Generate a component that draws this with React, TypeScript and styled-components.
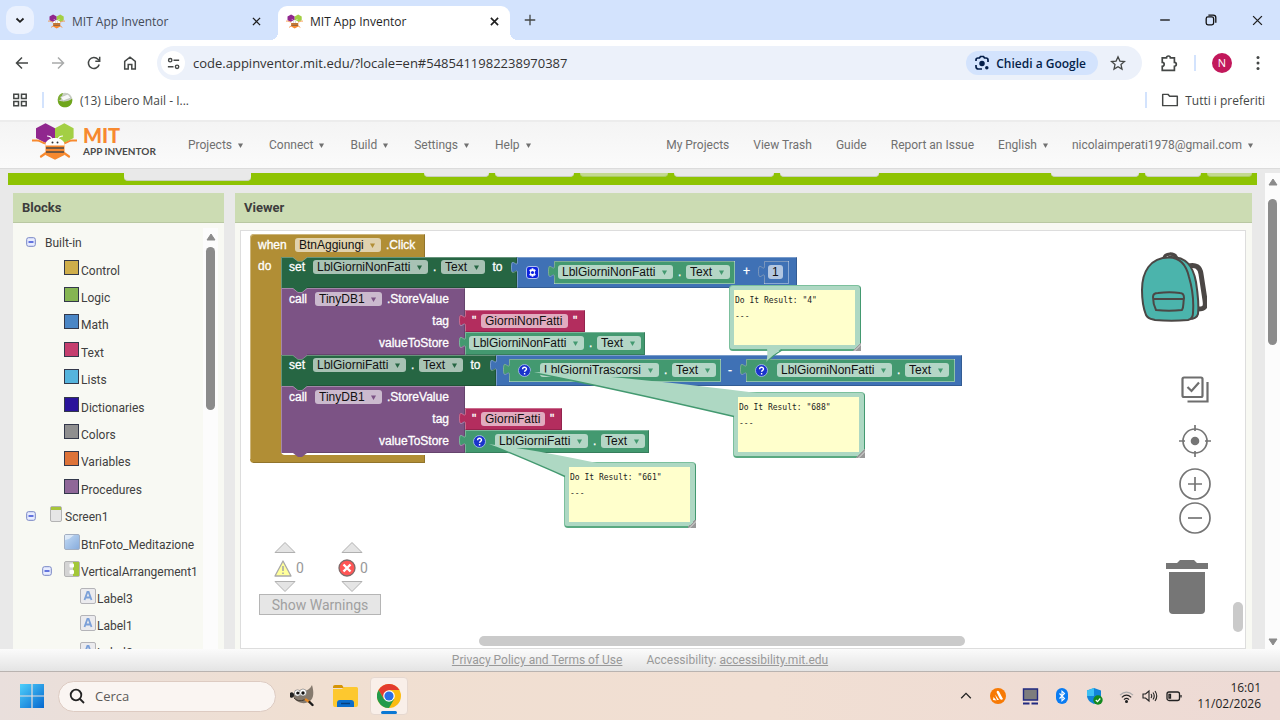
import React from "react";
import styled, { createGlobalStyle, css } from "styled-components";

const GlobalStyle = createGlobalStyle`
  *, *::before, *::after { box-sizing: border-box; }
  body { margin: 0; background: #fff; }
  button, input, select, textarea { font: inherit; color: inherit; }
  button { border: 0; background: none; padding: 0; cursor: pointer; }
  svg { display: block; flex: none; }
`;

const UI_FONT = `"Open Sans", "Noto Sans", sans-serif`;
const PAGE_FONT = `Roboto, "Liberation Sans", sans-serif`;
const BLOCK_FONT = `"Liberation Sans", Arial, sans-serif`;

/* ---------- Shell ---------- */

const Screen = styled.div`
  display: flex;
  flex-direction: column;
  height: 100vh;
  overflow: hidden;
  font-family: ${UI_FONT};
  font-size: 12px;
  color: #1f1f1f;
`;

const IconButton = styled.button<{ $w?: number }>`
  display: flex;
  flex: none;
  align-items: center;
  justify-content: center;
  width: ${(p) => p.$w ?? 36}px;
  height: 28px;
`;

/* ---------- Browser ---------- */

const TabStrip = styled.div`
  display: flex;
  align-items: flex-end;
  flex: none;
  height: 40px;
  padding: 0 0 0 6px;
  background: #d3e3fd;
`;

const TabSearch = styled.button`
  display: flex;
  align-items: center;
  justify-content: center;
  width: 28px;
  height: 28px;
  margin-bottom: 6px;
  border-radius: 10px;
  background: #eaf1fe;
`;

const Tab = styled.div<{ $active?: boolean }>`
  display: flex;
  position: relative;
  align-items: center;
  gap: 7px;
  width: 232px;
  height: 34px;
  padding: 0 8px 4px;
  margin-left: 6px;
  color: ${(p) => (p.$active ? "#1f1f1f" : "#444b57")};
  ${(p) =>
    p.$active &&
    css`
      background: #fff;
      border-radius: 9px 9px 0 0;
      &::before,
      &::after {
        content: "";
        position: absolute;
        bottom: 0;
        width: 8px;
        height: 8px;
      }
      &::before {
        left: -8px;
        background: radial-gradient(circle at 0 0, #d3e3fd 8px, #fff 8px);
      }
      &::after {
        right: -8px;
        background: radial-gradient(circle at 100% 0, #d3e3fd 8px, #fff 8px);
      }
    `}
`;

const TabTitle = styled.span`
  flex: 1;
  white-space: nowrap;
  overflow: hidden;
`;

const TabClose = styled(IconButton)`
  height: 16px;
  width: 16px;
`;

const NewTab = styled(IconButton)`
  margin: 0 auto 6px 6px;
`;

const WindowButton = styled(IconButton)`
  width: 46px;
  height: 40px;
`;

const Toolbar = styled.div`
  display: flex;
  align-items: center;
  flex: none;
  height: 46px;
  padding: 0 4px;
  background: #fff;
`;

const Omnibox = styled.div`
  display: flex;
  align-items: center;
  flex: 1;
  height: 34px;
  margin: 0 9px;
  padding: 0 10px 0 4px;
  border-radius: 17px;
  background: #ecf1fa;
`;

const SiteInfo = styled.button`
  display: flex;
  align-items: center;
  justify-content: center;
  width: 24px;
  height: 24px;
  border-radius: 50%;
  background: #fff;
`;

const Url = styled.input`
  flex: 1;
  min-width: 0;
  border: 0;
  margin: 0 8px;
  padding: 0;
  background: none;
  font-size: 13px;
  color: #333;
  outline: 0;
`;

const AskChip = styled.button`
  display: flex;
  align-items: center;
  gap: 6px;
  height: 24px;
  padding: 0 12px 0 8px;
  margin-right: 6px;
  border-radius: 12px;
  background: #d3e3fd;
  color: #041e49;
  font-weight: 600;
  white-space: nowrap;
`;

const VRule = styled.span`
  flex: none;
  width: 2px;
  height: 16px;
  background: #d3e3fd;
`;

const ToolbarRule = styled(VRule)`
  margin-left: 7px;
`;

const BookmarkRule = styled(VRule)`
  margin: 0 13px 0 14px;
`;

const Avatar = styled.button`
  width: 20px;
  height: 20px;
  margin: 0 8px 0 16px;
  border-radius: 50%;
  background: #c2185b;
  color: #fff;
  font-size: 11px;
  line-height: 20px;
`;

const Bookmarks = styled.div`
  display: flex;
  align-items: center;
  flex: none;
  height: 34px;
  padding: 0 15px 6px 12px;
  color: #444746;
`;

const Bookmark = styled.a`
  display: flex;
  align-items: center;
  gap: 7px;
  color: inherit;
  text-decoration: none;
  white-space: nowrap;
`;

const AllBookmarks = styled(Bookmark)`
  margin-left: 14px;
  gap: 6px;
`;

const Spacer = styled.span`
  flex: 1;
`;

/* ---------- App Inventor page ---------- */

const Page = styled.main`
  display: flex;
  flex-direction: column;
  flex: 1;
  min-height: 0;
  font-family: ${PAGE_FONT};
  font-size: 12px;
  background: #e9e9e9;
`;

const Header = styled.header`
  display: flex;
  align-items: center;
  flex: none;
  height: 49px;
  padding: 0 27px 0 32px;
  border-top: 2px solid #ececec;
  border-bottom: 1px solid #dcdcdc;
  background: linear-gradient(#f4f4f4, #fbfbfb);
`;

const Brand = styled.a`
  display: flex;
  gap: 6px;
  width: 156px;
  margin-bottom: 7px;
  text-decoration: none;
`;

const BrandText = styled.span`
  display: flex;
  flex-direction: column;
  padding-top: 2px;
  font-family: Lato, Roboto, sans-serif;
  font-weight: 700;
  color: #4a4a4a;
  font-size: 10px;
  line-height: 12px;
  white-space: nowrap;
`;

const BrandMit = styled.span`
  color: #f7892f;
  font-size: 20px;
  font-weight: 900;
  line-height: 20px;
`;

const Nav = styled.nav<{ $gap: number }>`
  display: flex;
  gap: ${(p) => p.$gap}px;
  color: #707070;
  white-space: nowrap;
`;

const NavButton = styled.button`
  display: flex;
  align-items: center;
  gap: 6px;
  line-height: 20px;
`;

const NavLink = styled.a`
  color: inherit;
  text-decoration: none;
  line-height: 20px;
`;

const Workspace = styled.div`
  display: flex;
  flex: 1;
  min-height: 0;
  padding-top: 4px;
`;

const Content = styled.div`
  display: flex;
  flex-direction: column;
  flex: 1;
  min-width: 0;
  padding: 0 8px;
`;

const ActionBar = styled.div`
  display: flex;
  align-items: flex-start;
  flex: none;
  height: 12px;
  padding: 0 5px 0 116px;
  background: #8ec303;
`;

const ActionButton = styled.button<{ $w: number; $tall?: boolean; $on?: boolean; $push?: boolean }>`
  flex: none;
  width: ${(p) => p.$w}px;
  height: ${(p) => (p.$tall ? 8 : 4)}px;
  margin-left: ${(p) => (p.$push ? "auto" : "6px")};
  border-radius: 0 0 4px 4px;
  border-bottom: 1px solid ${(p) => (p.$on ? "#aacb63" : "#c9cfbd")};
  background: ${(p) => (p.$on ? "#c3d98f" : "#e9e9e9")};
  &:first-child { margin-left: 0; }
`;

const ActionGroup = styled.div`
  display: flex;
  margin-left: 173px;
  flex: 1;
`;

const Panels = styled.div`
  display: flex;
  flex: 1;
  gap: 11px;
  min-height: 0;
  padding: 8px 5px 0;
`;

const Panel = styled.section<{ $w?: number }>`
  display: flex;
  flex-direction: column;
  min-width: 0;
  ${(p) => (p.$w ? `flex: none; width: ${p.$w}px;` : "flex: 1;")}
  background: #f8f9f3;
`;

const PanelTitle = styled.h2`
  flex: none;
  height: 30px;
  margin: 0;
  padding: 0 9px;
  border-bottom: 1px solid #b9c8a2;
  background: #ccdcb3;
  color: #3d3d3d;
  font-size: 13px;
  font-weight: 700;
  line-height: 30px;
`;

const TreeArea = styled.div`
  display: flex;
  flex: 1;
  min-height: 0;
  padding: 5px 6px 0 0;
`;

const Tree = styled.ul`
  flex: 1;
  min-width: 0;
  margin: 0;
  padding: 1px 0 0;
  overflow: hidden;
  list-style: none;
  color: #404040;
`;

const TreeItem = styled.li<{ $pad: number; $gap?: boolean }>`
  display: flex;
  align-items: center;
  gap: 2px;
  height: 27px;
  padding-left: ${(p) => p.$pad}px;
  margin-bottom: ${(p) => (p.$gap ? 1 : 0)}px;
  white-space: nowrap;
`;

const Toggle = styled.button<{ $space: number }>`
  display: flex;
  flex: none;
  margin: 0 ${(p) => p.$space}px 2px 0;
`;

const TreeIcon = styled.span`
  display: flex;
  flex: none;
  justify-content: center;
  width: 15px;
  margin-bottom: 6px;
`;

const Swatch = styled.span<{ $color: string }>`
  width: 15px;
  height: 15px;
  border: 1px solid #33384a;
  background: ${(p) => p.$color};
`;

const ScrollTrack = styled.div<{ $w: number }>`
  display: flex;
  flex-direction: column;
  align-items: center;
  flex: none;
  width: ${(p) => p.$w}px;
  padding-top: 5px;
  background: #fcfcfc;
`;

const ScrollThumb = styled.span<{ $h: number; $top: number }>`
  flex: none;
  width: 9px;
  height: ${(p) => p.$h}px;
  margin-top: ${(p) => p.$top}px;
  border-radius: 5px;
  background: #8b8b8b;
`;

const ScrollEnd = styled.span`
  margin: auto 0 3px;
`;

/* ---------- Block canvas ---------- */

const Canvas = styled.div`
  position: relative;
  flex: 1;
  min-height: 0;
  margin: 7px 6px 0 5px;
  overflow: hidden;
  border: 1px solid #ddd;
  background: #fff;
  color: #fff;
  font-family: ${BLOCK_FONT};
  font-size: 12px;
`;

const Layer = styled.svg`
  position: absolute;
  left: 0;
  top: 0;
  pointer-events: none;
`;

const BlockRow = styled.div<{ $x: number; $y: number; $w?: number }>`
  position: absolute;
  left: ${(p) => p.$x}px;
  top: ${(p) => p.$y}px;
  display: flex;
  align-items: center;
  gap: 5px;
  width: ${(p) => (p.$w ? `${p.$w}px` : "max-content")};
  height: 16px;
  ${(p) => p.$w && "justify-content: flex-end;"}
`;

const Word = styled.span<{ $w?: number; $center?: boolean }>`
  flex: none;
  width: ${(p) => (p.$w ? `${p.$w}px` : "auto")};
  text-align: ${(p) => (p.$center ? "center" : "left")};
  line-height: 16px;
  white-space: nowrap;
  -webkit-text-stroke: 0.3px #fff;
`;

const FieldBox = styled.span<{ $w: number; $bg: string }>`
  display: flex;
  align-items: center;
  flex: none;
  width: ${(p) => p.$w}px;
  height: 14px;
  padding: 0 6px 0 4px;
  border-radius: 3px;
  background: ${(p) => p.$bg};
  color: #111;
`;

const FieldSelect = styled.select`
  flex: 1;
  min-width: 0;
  height: 14px;
  padding: 0;
  border: 0;
  appearance: none;
  background: none;
  line-height: 14px;
  outline: 0;
`;

const FieldInput = styled.input<{ $w: number; $bg: string }>`
  width: ${(p) => p.$w}px;
  height: 14px;
  padding: 0 4px;
  border: 0;
  border-radius: 3px;
  background: ${(p) => p.$bg};
  color: #111;
  line-height: 14px;
  outline: 0;
`;

const BlockIcon = styled.button<{ $round?: boolean }>`
  flex: none;
  width: 13px;
  height: 13px;
  margin-right: ${(p) => (p.$round ? 4 : 0)}px;
`;

const Bubble = styled.div<{ $x: number; $y: number }>`
  position: absolute;
  left: ${(p) => p.$x}px;
  top: ${(p) => p.$y}px;
  display: flex;
  width: 132px;
  height: 66px;
  padding: 4px 5px 4px 4px;
  border: 1px solid #7cc09d;
  border-right-color: #439970;
  border-bottom: 2px solid #5aa981;
  border-radius: 4px;
  background: #aed8c3;
`;

const BubbleText = styled.textarea`
  flex: 1;
  min-width: 0;
  padding: 3px 1px 2px;
  border: 0;
  resize: none;
  overflow: hidden;
  outline: 0;
  background: #ffffcc;
  color: #222;
  font-family: "DejaVu Sans Mono", "Liberation Mono", monospace;
  font-size: 8px;
  line-height: 16px;
`;

const Grip = styled.span`
  position: absolute;
  right: -1px;
  bottom: -2px;
  width: 9px;
  height: 9px;
  background: linear-gradient(135deg, transparent 50%, #999 50%, #999 60%, #bbb 60%, #bbb 68%, #999 68%);
`;

const Tools = styled.div`
  position: absolute;
  top: 19px;
  right: 34px;
  display: flex;
  flex-direction: column;
  align-items: flex-end;
`;

const Tool = styled.button<{ $gap: number; $inset?: number }>`
  display: flex;
  margin: ${(p) => p.$gap}px ${(p) => p.$inset ?? 0}px 0 0;
`;

const CanvasScroll = styled.span<{ $v?: boolean }>`
  position: absolute;
  border-radius: 5px;
  background: #cacaca;
  ${(p) =>
    p.$v
      ? css`right: 2px; bottom: 16px; width: 10px; height: 30px;`
      : css`left: 238px; right: 280px; bottom: 2px; height: 10px;`}
`;

const Warnings = styled.div`
  position: absolute;
  left: 18px;
  bottom: 33px;
  width: 122px;
  color: #999;
  font-family: ${PAGE_FONT};
  font-size: 14px;
`;

const Counters = styled.div`
  display: flex;
  gap: 38px;
  padding: 0 0 2px 15px;
`;

const Counter = styled.div`
  display: flex;
  flex-direction: column;
  gap: 4px;
  width: 29px;
`;

const CounterValue = styled.span<{ $shift?: boolean }>`
  display: flex;
  align-items: center;
  gap: 4px;
  height: 20px;
  padding-top: 2px;
  margin-left: ${(p) => (p.$shift ? -3 : 0)}px;
`;

const StepButton = styled.button`
  display: flex;
  width: 22px;
`;

const ShowWarnings = styled.button`
  width: 122px;
  height: 21px;
  border: 1px solid #b5b5b5;
  background: #e6e6e6;
  color: #a0a0a0;
  line-height: 18px;
`;

const Footer = styled.footer`
  display: flex;
  align-items: center;
  justify-content: center;
  gap: 24px;
  flex: none;
  height: 23px;
  border-bottom: 1px solid #b9b3b0;
  background: linear-gradient(#fbfbfb, #e4e4e4);
  color: #999;
`;

const FooterLink = styled.a`
  color: inherit;
`;

/* ---------- Taskbar ---------- */

const Taskbar = styled.div`
  display: flex;
  align-items: center;
  flex: none;
  height: 48px;
  padding: 0 19px 0 20px;
  background: linear-gradient(90deg, #e9dfdc, #f0dfd1 25%, #f1dfd3 60%, #eddad5);
`;

const SearchBox = styled.label`
  display: flex;
  align-items: center;
  gap: 10px;
  width: 218px;
  height: 31px;
  margin: 0 13px 0 14px;
  padding: 0 10px;
  border: 1px solid #ddcbc2;
  border-radius: 16px;
  background: #faf5f2;
`;

const SearchInput = styled.input`
  width: 150px;
  padding: 0;
  border: 0;
  background: none;
  font-size: 13px;
  outline: 0;
  &::placeholder { color: #5c5a59; opacity: 1; }
`;

const TaskButton = styled.button<{ $active?: boolean; $ml?: number }>`
  display: flex;
  flex-direction: column;
  align-items: center;
  justify-content: center;
  margin-left: ${(p) => p.$ml ?? 0}px;
  ${(p) =>
    p.$active &&
    css`
      width: 38px;
      height: 38px;
      border: 1px solid #e6d8d0;
      border-radius: 4px;
      background: #f9efe9;
      justify-content: flex-end;
      gap: 3px;
    `}
`;

const ActiveMark = styled.span`
  width: 16px;
  height: 3px;
  border-radius: 2px;
  background: #0a78d4;
`;

const Tray = styled.div`
  display: flex;
  align-items: center;
  margin-left: auto;
`;

const TrayButton = styled.button<{ $w?: number }>`
  display: flex;
  align-items: center;
  justify-content: center;
  width: ${(p) => p.$w ?? 32}px;
  height: 32px;
`;

const Clock = styled.button`
  width: 71px;
  text-align: right;
  line-height: 16px;
  white-space: nowrap;
`;

/* ---------- Drawings ---------- */

const Bee = ({ w, h }: { w: number; h: number }) => (
  <svg width={w} height={h} viewBox="0 0 45 37">
    <path d="M13.500 .3 23 5.300V15l-9.500 5L4 15V5.300z" fill="#90278e" />
    <path d="M32.300 .3 41.600 5.300V15l-9.300 5L23 15V5.300z" fill="#a3cf44" />
    <path d="M0 17.500h5c4 0 5 3 9 3M45 17.500h-5c-4 0-5 3-9 3" fill="none" stroke="#f7892f" strokeWidth="2" />
    <path d="M9 33.500 14 30M37 33.500 32 30" stroke="#f7892f" strokeWidth="2.200" strokeLinecap="round" />
    <path d="M13.500 21h19v11L23 36.700 13.500 32z" fill="#f7892f" />
    <path d="M14 25h18M14 29h18" stroke="#4a4a4a" strokeWidth="1.500" />
    <path d="M13.500 22.500c-1-10 20-10 19 0z" fill="#fff" />
    <path d="M20 16c-1-3-3-3-5-3M26 16c1-3 3-3 5-3" fill="none" stroke="#fff" strokeWidth="1.200" />
    <circle cx="20.500" cy="19.500" r="1" fill="#333" />
    <circle cx="25.500" cy="19.500" r="1" fill="#333" />
  </svg>
);

const Cross = ({ s, w = 1.4 }: { s: number; w?: number }) => (
  <svg width={s} height={s} viewBox="0 0 10 10" stroke="#1f1f1f" strokeWidth={w}>
    <path d="M1 1 9 9M9 1 1 9" />
  </svg>
);

const Line = ({ s = 16, w = 1.5, c = "#444746", children }: { s?: number; w?: number; c?: string; children: React.ReactNode }) => (
  <svg width={s} height={s} viewBox="0 0 16 16" fill="none" stroke={c} strokeWidth={w}>
    {children}
  </svg>
);

const Caret = ({ c = "#707070", s = 5 }: { c?: string; s?: number }) => (
  <svg width={s} height={s} viewBox="0 0 5 5">
    <path d="M0 .5h5L2.500 5z" fill={c} />
  </svg>
);

const ScrollArrow = ({ down }: { down?: boolean }) => (
  <svg width="10" height="8" viewBox="0 0 10 8">
    <path d={down ? "M1 1h8L5 7z" : "M1 7h8L5 1z"} fill="#8b8b8b" stroke="#8b8b8b" strokeLinejoin="round" />
  </svg>
);

const Minus = () => (
  <svg width="10" height="10" viewBox="0 0 10 10">
    <rect x=".7" y=".7" width="8.600" height="8.600" rx="1.800" fill="#e8edff" stroke="#7684c4" />
    <path d="M2.500 5h5" stroke="#2a3fd0" strokeWidth="1.400" />
  </svg>
);

const ScreenIcon = () => (
  <svg width="12" height="16" viewBox="0 0 12 16">
    <rect x=".5" y=".5" width="11" height="15" rx="1.500" fill="#e6e6e6" stroke="#b4b4b4" />
    <path d="M1 1h10v3H1z" fill="#a7c53a" />
  </svg>
);

const ButtonIcon = () => (
  <svg width="16" height="16" viewBox="0 0 16 16">
    <defs>
      <linearGradient id="btn" x1="0" y1="0" x2="1" y2="1">
        <stop offset="0" stopColor="#c4dcf5" />
        <stop offset="1" stopColor="#86abdc" />
      </linearGradient>
    </defs>
    <rect x=".5" y=".5" width="15" height="15" rx="1.500" fill="url(#btn)" stroke="#a3afc2" />
    <path d="M1 1h9L5 5 1 6z" fill="#fff" opacity=".5" />
  </svg>
);

const VerticalIcon = () => (
  <svg width="16" height="16" viewBox="0 0 16 16">
    <rect x=".5" y=".5" width="15" height="15" rx="1.500" fill="#d4d4d4" stroke="#b4b4b4" />
    <path d="M9 1h6v14H9z" fill="#a3c739" />
    <rect x="5.500" y="2.500" width="4.500" height="4" rx="1" fill="#fff" />
    <rect x="5.500" y="9" width="4.500" height="4" rx="1" fill="#fff" />
  </svg>
);

const LabelIcon = () => (
  <svg width="16" height="16" viewBox="0 0 16 16">
    <rect x=".5" y=".5" width="15" height="15" rx="1.500" fill="#ebebee" stroke="#b4b4b8" />
    <path d="M4.500 12 7.400 4h1.200l2.900 8M5.800 9.500h4.400" fill="none" stroke="#7ba0d8" strokeWidth="1.800" />
  </svg>
);

const Backpack = () => (
  <svg width="66" height="70" viewBox="0 0 66 70" stroke="#4b4745" strokeLinejoin="round">
    <path d="M47 14c8-2 12 1 13 8l4 26c1 7 0 9-7 9" fill="none" strokeWidth="5" />
    <path d="M54 20c3 12 4 22 4 33" fill="none" stroke="#fff" strokeWidth="1.500" />
    <path d="M23 7c0-6 11-7 13 0" fill="none" strokeWidth="3.500" />
    <path d="M28 5c17-1 24 9 27 25 2 13 3 24 2 32-1 4-4 5-9 5z" fill="#4bb4ac" strokeWidth="2" />
    <path d="M28 5.500C9 5.500 1 20 1 38c0 13 2 20 4 25 2 4 5 4 9 5 11 1 22 1 33 0 4-1 5-3 5-7 1-14-1-26-4-36C45 12 38 5.500 28 5.500z" fill="#4bb4ac" strokeWidth="2" />
    <path d="M12 45c0-3 2-4 5-4 8-1 15-1 22 0 3 0 4 2 4 5-1 5 0 9-2 12-8 1-18 1-26 0-2-4-3-9-3-13zM12 47h31" fill="none" strokeWidth="2" />
  </svg>
);

const CopyCheck = () => (
  <svg width="28" height="27" viewBox="0 0 28 27" fill="none" stroke="#6e6e6e" strokeWidth="2.200">
    <rect x="1.500" y="1.500" width="20" height="19.500" rx="1.500" />
    <path d="M6.500 11l4 4 7.500-8.500M26.500 6v19.500H6.500" />
  </svg>
);

const Target = () => (
  <svg width="32" height="32" viewBox="0 0 32 32" fill="none" stroke="#757575" strokeWidth="1.700">
    <circle cx="16" cy="16" r="12" />
    <circle cx="16" cy="16" r="4.300" fill="#757575" stroke="none" />
    <path d="M16 0v6M16 26v6M0 16h6M26 16h6" />
  </svg>
);

const Zoom = ({ plus }: { plus?: boolean }) => (
  <svg width="32" height="32" viewBox="0 0 32 32" fill="none" stroke="#757575" strokeWidth="1.700">
    <circle cx="16" cy="16" r="15" />
    <path d={plus ? "M9 16h14M16 9v14" : "M9 16h14"} />
  </svg>
);

const Trash = () => (
  <svg width="42" height="54" viewBox="0 0 42 54" fill="#767676">
    <path d="M0 3h11l3-3h14l3 3h11v6H0zM3 12h36v38q0 4-4 4H7q-4 0-4-4z" />
  </svg>
);

const Step = ({ down }: { down?: boolean }) => (
  <svg width="22" height="11" viewBox="0 0 22 11">
    <path d={down ? "M1 .5h20L11 10.500z" : "M1 10.500h20L11 .5z"} fill="#e4e4e4" stroke="#b0b0b0" />
  </svg>
);

const WarnIcon = () => (
  <svg width="18" height="17" viewBox="0 0 18 17">
    <path d="M9 1 17 16H1z" fill="#ffff99" stroke="#a9a9a9" strokeWidth="1.300" strokeLinejoin="round" />
    <path d="M9 6v5M9 12.500v1.500" stroke="#a9a9a9" strokeWidth="1.600" />
  </svg>
);

const ErrorIcon = () => (
  <svg width="18" height="18" viewBox="0 0 18 18">
    <circle cx="9" cy="9" r="8" fill="#f55" stroke="#7d6a6a" strokeWidth="1.300" />
    <path d="M5.500 5.500l7 7M12.500 5.500l-7 7" stroke="#fff" strokeWidth="2.400" />
  </svg>
);

const HelpGlyph = () => (
  <svg width="13" height="13" viewBox="0 0 13 13">
    <circle cx="6.500" cy="6.500" r="6" fill="#1a33cc" stroke="#b4c6f0" strokeWidth=".8" />
    <path d="M4.600 5.200c0-2.600 3.900-2.500 3.900-.2 0 1.400-1.900 1.400-1.900 2.800M6.600 9v1.400" fill="none" stroke="#fff" strokeWidth="1.400" />
  </svg>
);

const GearGlyph = () => (
  <svg width="13" height="13" viewBox="0 0 13 13">
    <rect x=".5" y=".5" width="12" height="12" rx="2.500" fill="#0c22e0" stroke="#c2d0f4" strokeWidth=".9" />
    <path
      d="M5.700 2.300h1.600l.3 1.300 1.300-.4.9 1.400-.9 1 0 1.800.9 1-.9 1.400-1.300-.4-.3 1.300H5.700l-.3-1.300-1.300.4-.9-1.400.9-1V5.600l-.9-1 .9-1.400 1.300.4z"
      fill="#fff"
    />
    <circle cx="6.500" cy="6.500" r="1.600" fill="#0c22e0" />
  </svg>
);

/* ---------- Blocks ---------- */

type Palette = { fill: string; field: string };
const GOLD: Palette = { fill: "#b18e35", field: "#e0d2ae" };
const SETTER: Palette = { fill: "#266643", field: "#a8c2b4" };
const GETTER: Palette = { fill: "#439970", field: "#b4d6c6" };
const CALL: Palette = { fill: "#7c5385", field: "#cbbace" };
const TEXT: Palette = { fill: "#b32d5e", field: "#e1abbf" };
const MATH: Palette = { fill: "#3f71b5", field: "#b2c6e1" };

type Rect = { x: number; y: number; w: number; h: number; p: Palette };

const StatementShape = ({ x, y, w, h, p }: Rect) => (
  <g>
    <path
      d={`M${x} ${y}h12l5 4h4l5-4H${x + w}v${h}H${x + 26}l-5 4h-4l-5-4H${x}z`}
      fill={p.fill}
    />
    <path d={`M${x + 0.5} ${y + h}V${y + 0.5}h11.500l5 4h4l5-4H${x + w}`} fill="none" stroke="#fff" strokeOpacity=".3" />
    <path d={`M${x + w - 0.5} ${y}v${h - 0.5}H${x + 26}`} fill="none" stroke="#000" strokeOpacity=".18" />
  </g>
);

const ValueShape = ({ x, y, w, h, p, inner }: Rect & { inner?: boolean }) => {
  const tab = `M${x} ${y}v4c0 8-6-6-6 6s6-2 6 6`;
  return (
    <g>
      <path d={`${tab}V${y + h}h${w}V${y}z`} fill={p.fill} />
      <path
        d={`M${x + w} ${y + 0.5}H${x + 0.5}v4c0 8-6-6-6 6s6-2 6 6V${y + h}`}
        fill="none"
        stroke={inner ? "#000" : "#fff"}
        strokeOpacity={inner ? ".15" : ".3"}
      />
      {inner && (
        <path d={`M${x + w} ${y + 0.5}H${x + 0.5}v4c0 8-6-6-6 6s6-2 6 6V${y + h}`} fill="none" stroke="#fff" strokeOpacity=".35" />
      )}
      <path
        d={`M${x + w - 0.5} ${y}v${h - 0.5}H${x}`}
        fill="none"
        stroke={inner ? "#fff" : "#000"}
        strokeOpacity={inner ? ".4" : ".18"}
      />
    </g>
  );
};

const BlockShapes = () => (
  <Layer width="760" height="300" viewBox="0 0 760 300">
    <path d="M13 3H184V26H66l-5 4h-4l-5-4H44q-4 0-4 4V220q0 4 4 4H184v8H13q-4 0-4-4V7q0-4 4-4z" fill={GOLD.fill} />
    <path d="M9.500 228V7q0-3.500 3.500-3.500H184M43 223.500H184" fill="none" stroke="#fff" strokeOpacity=".35" />
    <path d="M12 231.500H183.500V224M183.500 3v23" fill="none" stroke="#000" strokeOpacity=".18" />
    <StatementShape x={40} y={26} w={236} h={31} p={SETTER} />
    <StatementShape x={40} y={124} w={215} h={31} p={SETTER} />
    <StatementShape x={40} y={57} w={184} h={67} p={CALL} />
    <StatementShape x={40} y={155} w={184} h={67} p={CALL} />
    <path d="M52 26h14l-5 4h-4z" fill={GOLD.fill} />
    <path d="M52 57h14l-5 4h-4zM52 155h14l-5 4h-4z" fill={SETTER.fill} />
    <path d="M52 124h14l-5 4h-4z" fill={CALL.fill} />
    <ValueShape x={276} y={26} w={280} h={31} p={MATH} />
    <ValueShape x={313} y={30} w={181} h={23} p={GETTER} inner />
    <ValueShape x={523} y={30} w={25} h={23} p={MATH} inner />
    <ValueShape x={224} y={79} w={120} h={22} p={TEXT} />
    <ValueShape x={224} y={101} w={180} h={23} p={GETTER} />
    <ValueShape x={255} y={124} w={466} h={31} p={MATH} />
    <ValueShape x={268} y={128} w={212} h={23} p={GETTER} inner />
    <ValueShape x={505} y={128} w={209} h={23} p={GETTER} inner />
    <ValueShape x={224} y={177} w={97} h={22} p={TEXT} />
    <ValueShape x={224} y={199} w={184} h={23} p={GETTER} />
  </Layer>
);

const Tails = () => (
  <Layer width="760" height="300" viewBox="0 0 760 300">
    <g fill="#aed8c3">
      <path d="M525 132Q527 126 526 117h15Q533 123 525 132z" />
      <path d="M289 141Q365 143 516 162L516 164 496 166 495 186Q366 156 289 141z" />
      <path d="M246 213Q290 218 356 232L356 235 327 236 326 246Q266 220 246 213z" />
    </g>
    <g fill="none" stroke="#439970" strokeWidth="1.400">
      <path d="M525 132Q531 125 541 119" />
      <path d="M289 141Q366 156 493 185.500" />
      <path d="M246 213Q266 220 324 245.500" />
    </g>
  </Layer>
);

const Field = ({ value, w, p, label }: { value: string; w: number; p: Palette; label: string }) => (
  <FieldBox $w={w} $bg={p.field}>
    <FieldSelect aria-label={label} defaultValue={value}>
      <option>{value}</option>
    </FieldSelect>
    <Caret c={p.fill} />
  </FieldBox>
);

const Property = ({ component, w, p }: { component: string; w: number; p: Palette }) => (
  <>
    <Field value={component} w={w} p={p} label="Component" />
    <Word $w={3}>.</Word>
    <Field value="Text" w={44} p={p} label="Property" />
  </>
);

const Help = () => (
  <BlockIcon $round aria-label="Show result">
    <HelpGlyph />
  </BlockIcon>
);

const Setter = ({ y, component, w }: { y: number; component: string; w: number }) => (
  <BlockRow $x={48} $y={y}>
    <Word $w={19}>set</Word>
    <Property component={component} w={w} p={SETTER} />
    <Word $w={15} $center>to</Word>
  </BlockRow>
);

const StoreCall = ({ y }: { y: number }) => (
  <>
    <BlockRow $x={48} $y={y}>
      <Word $w={21}>call</Word>
      <Field value="TinyDB1" w={67} p={CALL} label="Component" />
      <Word>.StoreValue</Word>
    </BlockRow>
    <BlockRow $x={48} $y={y + 22} $w={160}>
      <Word>tag</Word>
    </BlockRow>
    <BlockRow $x={48} $y={y + 44} $w={160}>
      <Word>valueToStore</Word>
    </BlockRow>
  </>
);

const TextBlock = ({ y, value, w }: { y: number; value: string; w: number }) => (
  <BlockRow $x={231} $y={y}>
    <Word $w={4}>"</Word>
    <FieldInput aria-label="Text" defaultValue={value} $w={w} $bg={TEXT.field} />
    <Word $w={4}>"</Word>
  </BlockRow>
);

const Result = ({ x, y, value }: { x: number; y: number; value: string }) => (
  <Bubble $x={x} $y={y}>
    <BubbleText aria-label="Do it result" defaultValue={`Do It Result: "${value}"\n---`} />
    <Grip />
  </Bubble>
);

const BlockCanvas = () => (
  <Canvas>
    <BlockShapes />
    <BlockRow $x={17} $y={6}>
      <Word $w={32}>when</Word>
      <Field value="BtnAggiungi" w={86} p={GOLD} label="Component" />
      <Word>.Click</Word>
    </BlockRow>
    <BlockRow $x={17} $y={27}>
      <Word>do</Word>
    </BlockRow>
    <Setter y={28} component="LblGiorniNonFatti" w={115} />
    <StoreCall y={60} />
    <Setter y={126} component="LblGiorniFatti" w={93} />
    <StoreCall y={158} />

    <BlockRow $x={285} $y={33}>
      <BlockIcon aria-label="Configure block">
        <GearGlyph />
      </BlockIcon>
    </BlockRow>
    <BlockRow $x={317} $y={33}>
      <Property component="LblGiorniNonFatti" w={115} p={GETTER} />
    </BlockRow>
    <BlockRow $x={502} $y={32}>
      <Word>+</Word>
    </BlockRow>
    <BlockRow $x={527} $y={33}>
      <FieldInput aria-label="Number" defaultValue="1" $w={15} $bg={MATH.field} />
    </BlockRow>

    <TextBlock y={82} value="GiorniNonFatti" w={87} />
    <BlockRow $x={228} $y={104}>
      <Property component="LblGiorniNonFatti" w={115} p={GETTER} />
    </BlockRow>

    <BlockRow $x={277} $y={131}>
      <Help />
      <Property component="LblGiorniTrascorsi" w={119} p={GETTER} />
    </BlockRow>
    <BlockRow $x={487} $y={131}>
      <Word>-</Word>
    </BlockRow>
    <BlockRow $x={514} $y={131}>
      <Help />
      <Property component="LblGiorniNonFatti" w={115} p={GETTER} />
    </BlockRow>

    <TextBlock y={180} value="GiorniFatti" w={64} />
    <BlockRow $x={232} $y={202}>
      <Help />
      <Property component="LblGiorniFatti" w={93} p={GETTER} />
    </BlockRow>

    <Result x={488} y={54} value="4" />
    <Result x={492} y={161} value="688" />
    <Result x={323} y={231} value="661" />
    <Tails />

    <Warnings>
      <Counters>
        <Counter>
          <StepButton aria-label="Previous warning"><Step /></StepButton>
          <CounterValue><WarnIcon />0</CounterValue>
          <StepButton aria-label="Next warning"><Step down /></StepButton>
        </Counter>
        <Counter>
          <StepButton aria-label="Previous error"><Step /></StepButton>
          <CounterValue $shift><ErrorIcon />0</CounterValue>
          <StepButton aria-label="Next error"><Step down /></StepButton>
        </Counter>
      </Counters>
      <ShowWarnings>Show Warnings</ShowWarnings>
    </Warnings>

    <Tools>
      <Tool $gap={2} $inset={4} aria-label="Backpack"><Backpack /></Tool>
      <Tool $gap={54} $inset={2} aria-label="Select blocks"><CopyCheck /></Tool>
      <Tool $gap={22} aria-label="Center blocks"><Target /></Tool>
      <Tool $gap={11} aria-label="Zoom in"><Zoom plus /></Tool>
      <Tool $gap={2} aria-label="Zoom out"><Zoom /></Tool>
      <Tool $gap={26} $inset={3} aria-label="Trash"><Trash /></Tool>
    </Tools>
    <CanvasScroll />
    <CanvasScroll $v />
  </Canvas>
);

/* ---------- Tree ---------- */

const BUILT_IN: [string, string][] = [
  ["Control", "#cfae4b"],
  ["Logic", "#85b552"],
  ["Math", "#4a86c5"],
  ["Text", "#c53e6e"],
  ["Lists", "#55b4dd"],
  ["Dictionaries", "#2a149b"],
  ["Colors", "#8f8f8f"],
  ["Variables", "#dd7338"],
  ["Procedures", "#8f6798"],
];

const BlocksTree = () => (
  <Tree>
    <TreeItem $pad={13} $gap>
      <Toggle $space={7} aria-label="Collapse Built-in"><Minus /></Toggle>
      Built-in
    </TreeItem>
    {BUILT_IN.map(([name, color], i) => (
      <TreeItem key={name} $pad={51} $gap={i === 2 || i === 4 || i === 7}>
        <TreeIcon><Swatch $color={color} /></TreeIcon>
        {name}
      </TreeItem>
    ))}
    <TreeItem $pad={13} $gap>
      <Toggle $space={10} aria-label="Collapse Screen1"><Minus /></Toggle>
      <TreeIcon><ScreenIcon /></TreeIcon>
      Screen1
    </TreeItem>
    <TreeItem $pad={51}>
      <TreeIcon><ButtonIcon /></TreeIcon>
      BtnFoto_Meditazione
    </TreeItem>
    <TreeItem $pad={29}>
      <Toggle $space={10} aria-label="Collapse VerticalArrangement1"><Minus /></Toggle>
      <TreeIcon><VerticalIcon /></TreeIcon>
      VerticalArrangement1
    </TreeItem>
    {["Label3", "Label1", "Label2"].map((name) => (
      <TreeItem key={name} $pad={67}>
        <TreeIcon><LabelIcon /></TreeIcon>
        {name}
      </TreeItem>
    ))}
  </Tree>
);

/* ---------- App ---------- */

const Menu = ({ children }: { children: string }) => (
  <NavButton>
    {children}
    <Caret />
  </NavButton>
);

export default function App() {
  return (
    <Screen>
      <GlobalStyle />
      <TabStrip>
        <TabSearch aria-label="Search tabs">
          <svg width="10" height="10" viewBox="0 0 10 10" fill="none" stroke="#1f1f1f" strokeWidth="1.800"><path d="M1.500 3.500 5 6.800l3.500-3.300" /></svg>
        </TabSearch>
        <Tab>
          <Bee w={17} h={17} />
          <TabTitle>MIT App Inventor</TabTitle>
          <TabClose aria-label="Close tab"><Cross s={9} /></TabClose>
        </Tab>
        <Tab $active>
          <Bee w={17} h={17} />
          <TabTitle>MIT App Inventor</TabTitle>
          <TabClose aria-label="Close tab"><Cross s={9} w={1.8} /></TabClose>
        </Tab>
        <NewTab $w={28} aria-label="New tab">
          <Line s={14}><path d="M8 2v12M2 8h12" /></Line>
        </NewTab>
        <WindowButton aria-label="Minimize"><Line s={14} c="#111"><path d="M2.500 8h11" /></Line></WindowButton>
        <WindowButton aria-label="Restore">
          <Line s={14} c="#111"><rect x="2.500" y="4.500" width="8.500" height="9" rx="2" /><path d="M5 2.500h5.500q3 0 3 3V11" /></Line>
        </WindowButton>
        <WindowButton aria-label="Close"><Cross s={11} w={1.2} /></WindowButton>
      </TabStrip>

      <Toolbar>
        <IconButton aria-label="Back"><Line><path d="M14 8H3M8 2.500 2.500 8 8 13.500" /></Line></IconButton>
        <IconButton aria-label="Forward"><Line c="#a9abab"><path d="M2 8h11M8 2.500 13.500 8 8 13.500" /></Line></IconButton>
        <IconButton aria-label="Reload">
          <Line><path d="M13.200 9.500A5.500 5.500 0 1 1 12 4.300l1.500 1.500" /><path d="M13.700 1.800v4.400H9.300" /></Line>
        </IconButton>
        <IconButton aria-label="Home"><Line><path d="M2.700 14V6.300L8 2.200l5.300 4.100V14H9.800V9.500H6.200V14z" /></Line></IconButton>
        <Omnibox>
          <SiteInfo aria-label="Site information">
            <Line s={15}><circle cx="4.500" cy="4.500" r="1.800" /><path d="M8 4.500h6M2 11.500h6" /><circle cx="11.800" cy="11.500" r="1.800" /></Line>
          </SiteInfo>
          <Url aria-label="Address" defaultValue="code.appinventor.mit.edu/?locale=en#5485411982238970387" />
          <AskChip>
            <Line c="#041e49" w={1.7}>
              <path d="M2 6V5q0-2 2-2h1.500l1-1.500h3l1 1.500H12q2 0 2 2v2M2 10v1.500q0 2.500 2.500 2.500H8" />
              <circle cx="8" cy="8.500" r="1.900" fill="#041e49" />
              <circle cx="12.800" cy="12.800" r=".9" fill="#041e49" />
            </Line>
            Chiedi a Google
          </AskChip>
          <IconButton $w={28} aria-label="Bookmark">
            <Line><path d="M8 1.800l1.900 4.300 4.600.4-3.500 3.100 1 4.500L8 11.700l-4 2.400 1-4.500L1.500 6.500l4.600-.4z" strokeWidth="1.300" /></Line>
          </IconButton>
        </Omnibox>
        <IconButton aria-label="Extensions">
          <Line s={18}><path d="M2 3.500h3.800a1.700 1.700 0 0 1 3.400 0h3.600v4a1.700 1.700 0 0 1 0 3.400v3.600H2v-3.600c2.300 0 2.300-3.500 0-3.500z" /></Line>
        </IconButton>
        <ToolbarRule />
        <Avatar aria-label="Profile">N</Avatar>
        <IconButton aria-label="Menu">
          <svg width="4" height="16" viewBox="0 0 4 16" fill="#444746"><circle cx="2" cy="2.500" r="1.500" /><circle cx="2" cy="8" r="1.500" /><circle cx="2" cy="13.500" r="1.500" /></svg>
        </IconButton>
      </Toolbar>

      <Bookmarks>
        <Line><path d="M1.800 2.300h4.700v4.200H1.800zM9.500 2.300h4.700v4.200H9.500zM1.800 9.500h4.700v4.200H1.800zM9.500 9.500h4.700v4.200H9.500z" /></Line>
        <BookmarkRule />
        <Bookmark href="#mail">
          <svg width="16" height="16" viewBox="0 0 16 16">
            <circle cx="8" cy="8" r="7.300" fill="#c9cfc4" />
            <path d="M.8 7.500C3 10.500 12 10 15.200 6.500 16 12 12.500 15.300 8 15.300S.5 12 .8 7.500z" fill="#6fa61c" />
            <path d="M.8 8C.8 4 3 1.500 6 1L3.500 8z" fill="#7fae35" />
            <path d="M3.500 5 11 2l3 4-8 3z" fill="#f7f7f7" stroke="#b5bab0" strokeWidth=".7" />
          </svg>
          (13) Libero Mail - I...
        </Bookmark>
        <Spacer />
        <VRule />
        <AllBookmarks href="#all">
          <Line s={18} w={1.3}><path d="M1.500 3h4.700l1.500 1.600h6.800v8.400h-13z" strokeLinejoin="round" /></Line>
          Tutti i preferiti
        </AllBookmarks>
      </Bookmarks>

      <Page>
        <Header>
          <Brand href="#home">
            <Bee w={45} h={37} />
            <BrandText>
              <BrandMit>MIT</BrandMit>
              APP INVENTOR
            </BrandText>
          </Brand>
          <Nav $gap={26}>
            <Menu>Projects</Menu>
            <Menu>Connect</Menu>
            <Menu>Build</Menu>
            <Menu>Settings</Menu>
            <Menu>Help</Menu>
          </Nav>
          <Spacer />
          <Nav $gap={24}>
            <NavLink href="#projects">My Projects</NavLink>
            <NavLink href="#trash">View Trash</NavLink>
            <NavLink href="#guide">Guide</NavLink>
            <NavLink href="#issue">Report an Issue</NavLink>
            <Menu>English</Menu>
            <Menu>nicolaimperati1978@gmail.com</Menu>
          </Nav>
        </Header>

        <Workspace>
          <Content>
            <ActionBar>
              <ActionButton $w={127} $tall aria-label="Project" />
              <ActionGroup>
                <ActionButton $w={65} aria-label="Screen" />
                <ActionButton $w={79} aria-label="Add screen" />
                <ActionButton $w={88} $on aria-label="Remove screen" />
                <ActionButton $w={100} aria-label="Project properties" />
                <ActionButton $w={99} aria-label="Publish" />
                <ActionButton $w={88} $push aria-label="Designer" />
                <ActionButton $w={56} aria-label="Blocks" />
                <ActionButton $w={45} $on aria-label="Current editor" />
              </ActionGroup>
            </ActionBar>
            <Panels>
              <Panel $w={211}>
                <PanelTitle>Blocks</PanelTitle>
                <TreeArea>
                  <BlocksTree />
                  <ScrollTrack $w={15}>
                    <ScrollArrow />
                    <ScrollThumb $h={163} $top={6} />
                  </ScrollTrack>
                </TreeArea>
              </Panel>
              <Panel>
                <PanelTitle>Viewer</PanelTitle>
                <BlockCanvas />
              </Panel>
            </Panels>
          </Content>
          <ScrollTrack $w={15}>
            <ScrollArrow />
            <ScrollThumb $h={146} $top={13} />
            <ScrollEnd><ScrollArrow down /></ScrollEnd>
          </ScrollTrack>
        </Workspace>

        <Footer>
          <FooterLink href="#privacy">Privacy Policy and Terms of Use</FooterLink>
          <span>Accessibility: <FooterLink href="#a11y">accessibility.mit.edu</FooterLink></span>
        </Footer>
      </Page>

      <Taskbar>
        <TaskButton aria-label="Start">
          <svg width="24" height="24" viewBox="0 0 24 24">
            <defs>
              <linearGradient id="win" x1="0" y1="0" x2="1" y2="1">
                <stop offset="0" stopColor="#4fd0fb" />
                <stop offset="1" stopColor="#0567cf" />
              </linearGradient>
            </defs>
            <path d="M0 0h11.400v11.400H0zM12.600 0H24v11.400H12.600zM0 12.600h11.400V24H0zM12.600 12.600H24V24H12.600z" fill="url(#win)" />
          </svg>
        </TaskButton>
        <SearchBox>
          <Line c="#222" w={1.8}><circle cx="7" cy="7" r="5.300" /><path d="M11 11l4 4" /></Line>
          <SearchInput placeholder="Cerca" aria-label="Cerca" />
        </SearchBox>
        <TaskButton aria-label="GIMP">
          <svg width="25" height="24" viewBox="0 0 25 24">
            <path d="M2 10c5-1 8-3 12-3 4 0 7-2 9-6 2 7 2 13-2 16-5 4-13 2-16-3z" fill="#857a6e" />
            <path d="M1 9c2-2 4 0 4 2s-2 4-4 2z" fill="#222" />
            <circle cx="8.500" cy="9" r="3.200" fill="#fff" stroke="#555" strokeWidth=".5" />
            <circle cx="14" cy="8.500" r="3.500" fill="#fff" stroke="#555" strokeWidth=".5" />
            <circle cx="8.800" cy="9" r="1.600" fill="#111" />
            <circle cx="14" cy="9" r="1.700" fill="#111" />
            <path d="M5 14c4 4 8 3 12 1" fill="none" stroke="#3c352e" />
            <path d="M16 15l5 3.500" stroke="#e88a24" strokeWidth="2.200" />
            <path d="M20.500 18l3 3" stroke="#1c1c1c" strokeWidth="2.400" strokeLinecap="round" />
          </svg>
        </TaskButton>
        <TaskButton $ml={19} aria-label="File Explorer">
          <svg width="25" height="24" viewBox="0 0 25 24">
            <path d="M0 3q0-2 2-2h7l2 3H0z" fill="#d69405" />
            <path d="M0 5l9 0 2-2h12.500q1.500 0 1.500 1.500V21q0 2-2 2H2q-2 0-2-2z" fill="#fdc82f" />
            <path d="M4 23v-4q0-3 3-3h11q3 0 3 3v4z" fill="#0b6dcb" />
            <path d="M8 19.500h9" stroke="#053f7d" strokeWidth="1.500" />
          </svg>
        </TaskButton>
        <TaskButton $active $ml={12} aria-label="Chrome">
          <svg width="24" height="24" viewBox="0 0 24 24">
            <circle cx="12" cy="12" r="12" fill="#fbbc12" />
            <path d="M1.600 6A12 12 0 0 1 22.400 6H12L6.800 15z" fill="#e33b2e" />
            <path d="M1.600 6A12 12 0 0 0 12 24l5.200-9H6.800z" fill="#229a4b" />
            <circle cx="12" cy="12" r="5.800" fill="#fff" />
            <circle cx="12" cy="12" r="4.600" fill="#2a6fe8" />
          </svg>
          <ActiveMark />
        </TaskButton>
        <Tray>
          <TrayButton aria-label="Show hidden icons"><Line s={14} c="#222"><path d="M2.500 10.500 8 5l5.500 5.500" /></Line></TrayButton>
          <TrayButton aria-label="Antivirus">
            <svg width="16" height="16" viewBox="0 0 16 16">
              <circle cx="8" cy="8" r="8" fill="#f77a05" />
              <path d="M6.500 4q1-2 2.500-.5l4 7.500q-1.500 1.500-3 0zM5 6.500l4 5.500H7zM3.500 9l3 3.500-3.500-.5z" fill="#fff" />
            </svg>
          </TrayButton>
          <TrayButton aria-label="Display">
            <svg width="17" height="17" viewBox="0 0 17 17">
              <path d="M1.500 1h14v11h-14z" fill="#7d7d7d" stroke="#222a80" strokeWidth="1.400" />
              <path d="M1 15.500h6.500M9.500 15.500H16" stroke="#222a80" strokeWidth="2" />
            </svg>
          </TrayButton>
          <TrayButton aria-label="Bluetooth">
            <svg width="12" height="16" viewBox="0 0 12 16">
              <rect width="12" height="16" rx="6" fill="#0a7cf2" />
              <path d="M3.500 5.500l5 5L6 12.800V3.200l2.500 2.300-5 5" fill="none" stroke="#fff" strokeWidth="1.100" />
            </svg>
          </TrayButton>
          <TrayButton aria-label="Security">
            <svg width="17" height="17" viewBox="0 0 17 17">
              <path d="M8 0l7 2.500v5c0 4-3 7-7 8.500-4-1.500-7-4.500-7-8.500v-5z" fill="#1184d8" />
              <path d="M8 0v8H1V2.500z" fill="#3cc0f2" />
              <circle cx="12" cy="12" r="4.700" fill="#148a1e" />
              <path d="M9.800 12l1.700 1.700 2.800-3.200" fill="none" stroke="#fff" strokeWidth="1.200" />
            </svg>
          </TrayButton>
          <TrayButton aria-label="Wi-Fi">
            <Line s={15} c="#222" w={1.2}>
              <path d="M1 6.500q7-6.500 14 0" stroke="#aaa" /><path d="M3 9q5-4.800 10 0M5.300 11.300q2.700-2.500 5.400 0" /><circle cx="8" cy="13.300" r="1" fill="#222" />
            </Line>
          </TrayButton>
          <TrayButton $w={16} aria-label="Volume">
            <Line s={16} c="#222" w={1.1}>
              <path d="M1 6h2.500L7 3v10L3.500 10H1zM9 6q1.500 2 0 4M11 4.500q2.500 3.500 0 7M13 3q3.500 5 0 10" />
            </Line>
          </TrayButton>
          <TrayButton aria-label="Battery">
            <Line s={16} c="#222" w={1.3}>
              <rect x="1" y="4" width="12.500" height="8.500" rx="2" /><path d="M3 6.500h1.500v3.500H3zM15 7v2.500" />
            </Line>
          </TrayButton>
          <Clock>16:01<br />11/02/2026</Clock>
        </Tray>
      </Taskbar>
    </Screen>
  );
}
